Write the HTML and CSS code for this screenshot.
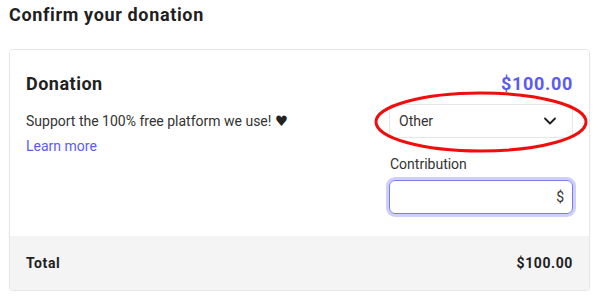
FILE: index.html
```html
<!DOCTYPE html>
<html lang="en">
<head>
  <meta charset="UTF-8" />
  <meta name="viewport" content="width=device-width, initial-scale=1" />
  <title>Confirm your donation</title>
  <link rel="stylesheet" href="styles.css">
</head>
<body>

  <h1 class="page-title">Confirm your donation</h1>

  <section class="card">
    <div class="card-body">
      <div class="info">
        <h2 class="card-title">Donation</h2>
        <p class="desc">Support the 100% free platform we use! <span class="heart">&#9829;</span></p>
        <a href="#" class="learn">Learn more</a>
      </div>

      <div class="options">
        <div class="price">$100.00</div>

        <div class="select-wrap">
          <div class="select">
            <span>Other</span>
            <svg class="chevron" width="12" height="8" viewBox="0 0 12 8">
              <path d="M1 1.5 L6 6.5 L11 1.5" fill="none" stroke="#1f1f1f" stroke-width="1.8" stroke-linecap="round" stroke-linejoin="round" />
            </svg>
          </div>
          <!-- red marker drawn over the select -->
          <svg class="circle" width="214" height="62" viewBox="0 0 214 62">
            <ellipse cx="107" cy="31" rx="105" ry="29" fill="none" stroke="#f20d0d" stroke-width="3" />
          </svg>
        </div>

        <label class="field-label" for="amount">Contribution</label>
        <div class="input">
          <input id="amount" type="text" />
          <span class="unit">$</span>
        </div>
      </div>
    </div>

    <div class="card-footer">
      <span>Total</span>
      <span>$100.00</span>
    </div>
  </section>

</body>
</html>
```

FILE: styles.css
```css
* {
  margin: 0; padding: 0; box-sizing: border-box;
  font-family: Roboto, 'Liberation Sans', sans-serif;
}

body {
  background: #fff;
  color: #222;
  padding: 1px 10px 0 9px;
}

.page-title {
  font-size: 18px;
  font-weight: 700;
  line-height: 27px;
  letter-spacing: 0.65px;
  color: #1f1f1f;
  margin-bottom: 21px;
}

.card {
  border: 1px solid #e6e6e6;
  border-radius: 4px;
  box-shadow: 0 1px 2px rgba(0,0,0,0.05);
  overflow: hidden;
}

.card-body {
  display: flex;
  justify-content: space-between;
  padding: 20px 16px 22px;
  background: #fff;
}

.card-title {
  font-size: 18px;
  font-weight: 700;
  line-height: 27px;
  letter-spacing: 0.5px;
  color: #1f1f1f;
}

.desc {
  font-size: 14px;
  line-height: 20px;
  color: #333;
  margin-top: 14px;
}

.heart {
  font-family: 'DejaVu Sans', sans-serif;
  color: #222;
  font-size: 14.5px;
}

.learn {
  display: inline-block;
  font-size: 14px;
  line-height: 20px;
  color: #5b5bef;
  text-decoration: none;
  margin-top: 5px;
}

.options {
  width: 184px;
  display: flex;
  flex-direction: column;
}

.price {
  text-align: right;
  font-size: 18px;
  font-weight: 700;
  line-height: 27px;
  letter-spacing: 0.7px;
  color: #5b5bf2;
  margin-bottom: 7px;
}

.select-wrap {
  position: relative;
}

.select {
  height: 34px;
  border: 1px solid #e6e6e6;
  border-radius: 3px;
  display: flex;
  align-items: center;
  justify-content: space-between;
  padding: 0 16px 0 9px;
  font-size: 14px;
  color: #333;
}

.chevron {
  display: block;
}

.circle {
  position: absolute;
  left: -15px;
  top: -13px;
  pointer-events: none;
}

.field-label {
  font-size: 14px;
  line-height: 20px;
  color: #333;
  margin-top: 16px;
  padding-left: 1px;
}

.input {
  margin-top: 6px;
  height: 34px;
  border: 1px solid #7c7cf0;
  border-radius: 6px;
  box-shadow: 0 0 0 3px #cfcffb;
  display: flex;
  align-items: center;
  padding: 0 8px 0 10px;
}

.input input {
  flex: 1;
  min-width: 0;
  border: none;
  outline: none;
  background: transparent;
  font-size: 14px;
}

.unit {
  font-size: 14px;
  color: #333;
}

.card-footer {
  display: flex;
  justify-content: space-between;
  background: #f4f4f4;
  padding: 17px 16px;
  font-size: 14px;
  line-height: 20px;
  font-weight: 700;
  letter-spacing: 0.6px;
  color: #1f1f1f;
}
```
